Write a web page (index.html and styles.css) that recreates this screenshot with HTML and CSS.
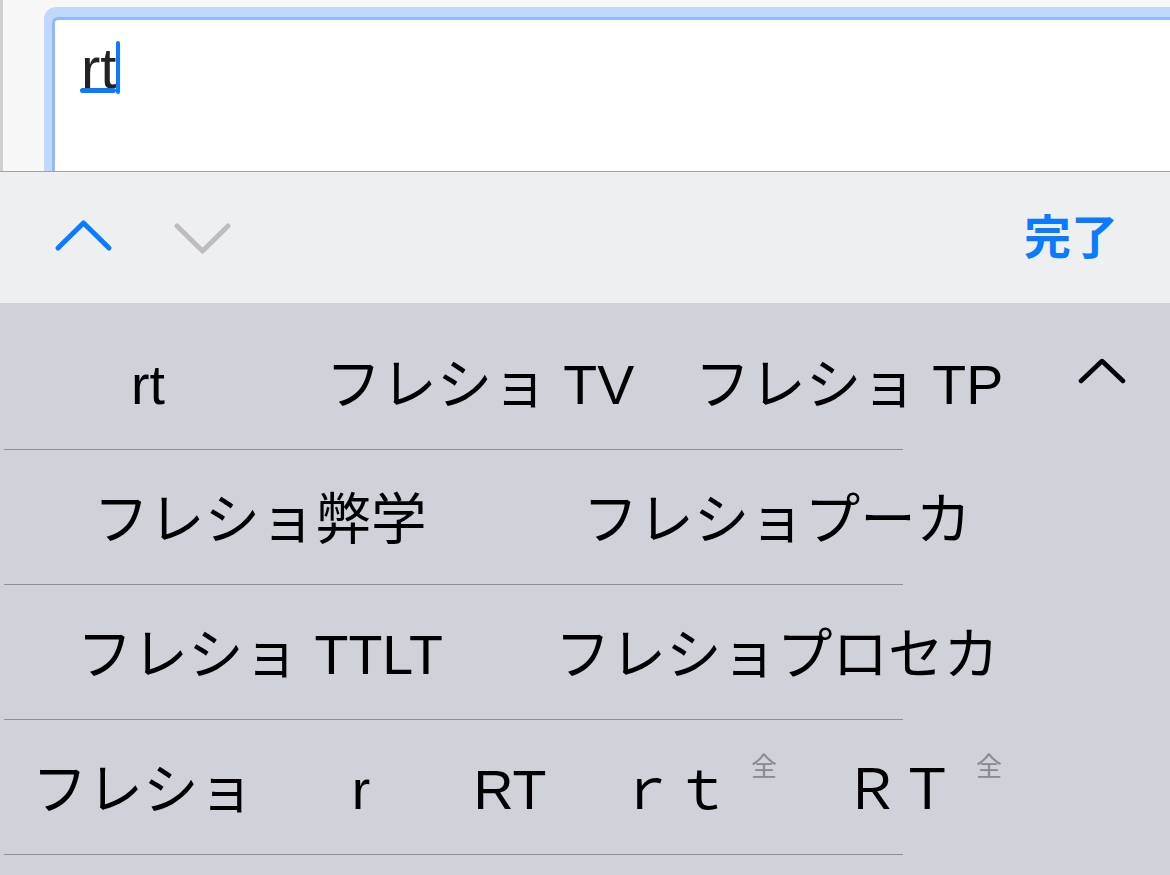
FILE: index.html
```html
<!DOCTYPE html>
<html lang="ja">
<head>
<meta charset="utf-8">
<title>候補</title>
<link rel="stylesheet" href="styles.css">
</head>
<body>
<div class="screen">
  <div class="top">
    <div class="ring">
      <div class="field">
        <div class="field-text"><span class="marked">rt</span><span class="caret"></span></div>
      </div>
    </div>
  </div>

  <div class="toolbar">
    <svg class="nav nav-up" width="60" height="40" viewBox="0 0 60 40"><path d="M4 30 L29.5 5 L55 30" /></svg>
    <svg class="nav nav-down" width="60" height="40" viewBox="0 0 60 40"><path d="M5 8 L30.5 33 L56 8" /></svg>
    <span class="done">完了</span>
  </div>

  <div class="candidates">
    <div class="list">
      <div class="row row-first">
        <div class="cells cols-a">
          <span class="cell">rt</span>
          <span class="cell">フレショ TV</span>
          <span class="cell">フレショ TP</span>
        </div>
      </div>
      <div class="row">
        <div class="cells cols-b">
          <span class="cell">フレショ弊学</span>
          <span class="cell">フレショプーカ</span>
        </div>
      </div>
      <div class="row">
        <div class="cells cols-b">
          <span class="cell">フレショ TTLT</span>
          <span class="cell">フレショプロセカ</span>
        </div>
      </div>
      <div class="row">
        <div class="cells cols-c">
          <span class="cell">フレショ</span>
          <span class="cell">r</span>
          <span class="cell">RT</span>
          <span class="cell">ｒｔ<span class="zen">全</span></span>
          <span class="cell">ＲＴ<span class="zen">全</span></span>
        </div>
      </div>
    </div>
    <div class="more">
      <svg class="more-icon" width="48" height="26" viewBox="0 0 48 26"><path d="M3 23 L24 3 L45 23" /></svg>
    </div>
  </div>
</div>
</body>
</html>
```

FILE: styles.css
```css
html, body {
  margin: 0;
  padding: 0;
}

body {
  width: 1170px;
  height: 875px;
  overflow: hidden;
  font-family: "Liberation Sans", "Noto Sans CJK JP", sans-serif;
  background: #cfd2d9;
}

.screen {
  display: flex;
  flex-direction: column;
  height: 875px;
}

/* ---------- top (text field) ---------- */
.top {
  height: 171px;
  overflow: hidden;
  background: #f8f7f7;
  border-left: 3px solid #d0d0d0;
  padding: 7px 0 0 41px;
  box-sizing: border-box;
  flex: none;
}

.ring {
  width: 1200px;
  height: 220px;
  background: #c0d8fb;
  border-radius: 12px 0 0 0;
  padding: 10px 0 0 8px;
  box-sizing: border-box;
}

.field {
  height: 100%;
  background: #fff;
  border-top: 3px solid #8fb9f8;
  border-left: 3px solid #8fb9f8;
  border-radius: 6px 0 0 0;
  padding: 18px 0 0 26px;
  box-sizing: border-box;
}

.field-text {
  font-size: 58px;
  line-height: 60px;
  color: #222;
  white-space: nowrap;
}

.marked {
  position: relative;
}

.marked::after {
  content: "";
  position: absolute;
  left: -1px;
  right: 0;
  bottom: 7px;
  height: 5px;
  border-radius: 3px;
  background: #0a7aff;
}

.caret {
  display: inline-block;
  width: 4px;
  height: 53px;
  margin-left: 0;
  border-radius: 2px;
  background: #0a7aff;
  vertical-align: -6px;
}

/* ---------- toolbar ---------- */
.toolbar {
  height: 132px;
  flex: none;
  box-sizing: border-box;
  border-top: 1px solid #a3a3a5;
  background: #eeeff1;
  display: flex;
  align-items: center;
  padding: 0 52px 0 54px;
}

.nav {
  display: block;
  fill: none;
  stroke-width: 5;
  stroke-linecap: round;
  stroke-linejoin: round;
}

.nav-up {
  stroke: #0a7aff;
}

.nav-down {
  stroke: #bdbdbf;
  margin-left: 58px;
}

.done {
  margin-left: auto;
  margin-bottom: 8px;
  font-family: "Noto Sans CJK JP", sans-serif;
  font-size: 47px;
  font-weight: 700;
  line-height: 1;
  color: #0a7aff;
}

/* ---------- candidates ---------- */
.candidates {
  flex: 1;
  display: flex;
  background: #cfd2d9;
}

.list {
  width: 1034px;
  flex: none;
}

.row {
  font-size: 55.5px;
  line-height: 60px;
  color: #000;
}

.row::after {
  content: "";
  display: block;
  width: 899px;
  height: 1px;
  margin-left: 4px;
  background: #8f9094;
}

.cells {
  display: grid;
  height: 134px;
  box-sizing: border-box;
  padding: 40px 0 0;
}

.row-first .cells {
  height: 146px;
  padding-top: 52px;
}

.cols-a {
  grid-template-columns: 296px 368px 370px;
}

.cols-b {
  grid-template-columns: 520px 514px;
}

.cols-c {
  grid-template-columns: 286px 150px 148px 228px 222px;
}

.cell {
  text-align: center;
  white-space: nowrap;
}

.zen {
  font-family: "Noto Sans CJK JP", sans-serif;
  font-size: 26px;
  line-height: 0;
  color: #8a8a8e;
  margin-left: 21px;
  vertical-align: 33px;
}

.more {
  flex: 1;
  display: flex;
  justify-content: center;
  align-items: flex-start;
  padding-top: 55px;
}

.more-icon {
  display: block;
  fill: none;
  stroke: #000;
  stroke-width: 4.5;
  stroke-linecap: round;
  stroke-linejoin: round;
}
```
